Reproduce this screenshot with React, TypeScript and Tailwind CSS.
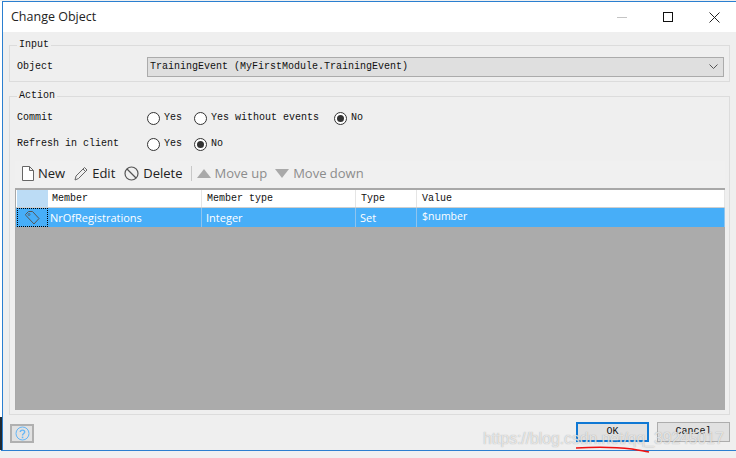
import React from "react";

const mono = "font-['Liberation_Mono',monospace] text-[10px] leading-none text-[#111]";
const ui = "font-['Open_Sans',sans-serif]";

function Radio({ label, checked, className = "" }: { label: string; checked?: boolean; className?: string }) {
  return (
    <div className={`flex items-center gap-[4px] ${className}`}>
      <span className="flex h-[13px] w-[13px] items-center justify-center rounded-full border border-[#333] bg-white">
        {checked && <span className="h-[7px] w-[7px] rounded-full bg-[#333]" />}
      </span>
      <span className={mono}>{label}</span>
    </div>
  );
}

function Tool({ icon, label, muted }: { icon: React.ReactNode; label: string; muted?: boolean }) {
  return (
    <div className="flex items-center gap-[4px]">
      {icon}
      <span className={`${ui} text-[13px] leading-none ${muted ? "text-[#8c8c8c]" : "text-[#222]"}`}>{label}</span>
    </div>
  );
}

const Cell = ({ cls, text, header, textCls = "text-[11px]" }: { cls: string; text: string; header?: boolean; textCls?: string }) => (
  <div className={`flex h-full items-center border-r ${header ? "border-[#e5e5e5]" : "border-[#8fc4ee]"} ${cls}`}>
    <span className={header ? mono : `${ui} ${textCls} leading-none text-white`}>{text}</span>
  </div>
);

export default function App() {
  return (
    <div className="relative h-[458px] w-[736px] overflow-hidden bg-[#f0f0f0]">
      <div className="absolute left-0 top-[1px] h-[416px] w-[2px] bg-white" />
      <div className="absolute left-0 top-[417px] h-[33px] w-[2px] bg-[#1f2a33]" />
      <div className="ml-[1px] mt-[1px] flex h-[450px] w-[740px] flex-col border-b border-l-2 border-t border-[#2b7fd0] bg-[#efefef]">
        {/* title bar */}
        <div className="flex h-[30px] shrink-0 items-center justify-between bg-white pl-[8px] pr-[20px]">
          <span className={`${ui} text-[12.5px] text-[#222]`}>Change Object</span>
          <div className="flex items-center gap-[36px]">
            <span className="h-px w-[10px] bg-[#c4c4c4]" />
            <span className="h-[10px] w-[10px] border border-[#111]" />
            <svg width="11" height="11" viewBox="0 0 11 11" className="mr-[1px]">
              <path d="M0.5 0.5 10.5 10.5 M10.5 0.5 0.5 10.5" stroke="#222" strokeWidth="1" fill="none" />
            </svg>
          </div>
        </div>

        <div className="flex w-[727px] flex-1 flex-col pl-[6px] pt-[8px]">
          {/* Input */}
          <fieldset className="h-[42px] border border-[#dcdcdc] pl-[7px] pr-[5px]">
            <legend className={`${mono} px-[2px]`}>Input</legend>
            <div className="mt-[7px] flex items-center">
              <span className={`${mono} w-[130px]`}>Object</span>
              <div className="flex h-[20px] flex-1 items-center justify-between border border-[#ababab] bg-[#dfdfdf] pl-[2px] pr-[5px]">
                <span className={mono}>TrainingEvent (MyFirstModule.TrainingEvent)</span>
                <svg width="9" height="6" viewBox="0 0 9 6">
                  <path d="M0.5 0.5 4.5 4.5 8.5 0.5" stroke="#555" fill="none" />
                </svg>
              </div>
            </div>
          </fieldset>

          {/* Action */}
          <fieldset className="mt-[9px] h-[324px] border border-[#dcdcdc] pl-[5px] pr-[4px]">
            <legend className={`${mono} ml-[2px] px-[2px]`}>Action</legend>
            <div className="flex h-[34px] items-center pl-[2px]">
              <span className={`${mono} w-[130px]`}>Commit</span>
              <Radio label="Yes" />
              <Radio label="Yes without events" className="ml-[12px]" />
              <Radio checked label="No" className="ml-[15px]" />
            </div>
            <div className="flex h-[18px] items-center pl-[2px]">
              <span className={`${mono} w-[130px]`}>Refresh in client</span>
              <Radio label="Yes" />
              <Radio checked label="No" className="ml-[12px]" />
            </div>

            {/* toolbar */}
            <div className="mt-[8px] flex h-[26px] items-center bg-[#f0f0f0] pb-[2px] pl-[6px]">
              <Tool
                label="New"
                icon={
                  <svg width="13" height="15" viewBox="0 0 13 15">
                    <path d="M1.5 0.5H8.5L12.5 4.5V14.5H1.5Z M8.5 0.5V4.5H12.5" stroke="#666" fill="#fff" />
                  </svg>
                }
              />
              <div className="ml-[9px]">
                <Tool
                  label="Edit"
                  icon={
                    <svg width="14" height="15" viewBox="0 0 14 15">
                      <path d="M1 14 2 10 10.5 1.5 13 4 4.5 12.5Z M9 3 11.5 5.5" stroke="#666" fill="none" />
                    </svg>
                  }
                />
              </div>
              <div className="ml-[9px]">
                <Tool
                  label="Delete"
                  icon={
                    <svg width="15" height="15" viewBox="0 0 15 15">
                      <circle cx="7.5" cy="7.5" r="6.5" stroke="#555" strokeWidth="1.2" fill="none" />
                      <path d="M3 3 12 12" stroke="#555" strokeWidth="1.2" />
                    </svg>
                  }
                />
              </div>
              <span className="ml-[8px] mr-[5px] h-[15px] w-px bg-[#c8c8c8]" />
              <Tool
                muted
                label="Move up"
                icon={
                  <svg width="14" height="9" viewBox="0 0 14 9">
                    <path d="M7 0 14 9H0Z" fill="#a9a9a9" />
                  </svg>
                }
              />
              <div className="ml-[8px]">
                <Tool
                  muted
                  label="Move down"
                  icon={
                    <svg width="14" height="9" viewBox="0 0 14 9">
                      <path d="M0 0H14L7 9Z" fill="#a9a9a9" />
                    </svg>
                  }
                />
              </div>
            </div>

            {/* grid */}
            <div className="mt-[1px] flex h-[222px] flex-col border-l border-t-2 border-[#a8a8a8] bg-[#ababab]">
              <div className="flex h-[17px] shrink-0 bg-white">
                <div className="ml-[1px] h-full w-[31px] bg-[#bcdcf5]" />
                <Cell header cls="w-[154px] pl-[4px]" text="Member" />
                <Cell header cls="w-[154px] pl-[5px]" text="Member type" />
                <Cell header cls="w-[61px] pl-[5px]" text="Type" />
                <Cell header cls="flex-1 pl-[5px]" text="Value" />
              </div>
              <div className="flex h-[20px] shrink-0 border-t border-[#cfcfcf] bg-[#47aef8]">
                <div className="ml-[1px] flex h-full w-[31px] items-center justify-center border border-dotted border-black">
                  <svg width="15" height="14" viewBox="0 0 15 14">
                    <path d="M0.5 3.5 3.5 0.5H7.5L14 7.5 9 13 1 4.5Z" stroke="#555" fill="none" />
                    <circle cx="4" cy="3.5" r="1" stroke="#555" fill="none" strokeWidth="0.7" />
                  </svg>
                </div>
                <Cell cls="w-[154px] pl-[2px]" text="NrOfRegistrations" />
                <Cell cls="w-[154px] pl-[4px]" text="Integer" />
                <Cell cls="w-[61px] pl-[4px]" text="Set" />
                <Cell cls="flex-1 pb-[3px] pl-[5px]" textCls="text-[10.5px]" text="$number" />
              </div>
            </div>
          </fieldset>

          {/* footer */}
          <div className="mt-[7px] flex items-start justify-between">
            <div className="ml-[1px] mt-[2px] flex h-[19px] w-[24px] items-center justify-center border-2 border-[#b0b0b0] bg-[#e1e1e1]">
              <svg width="15" height="15" viewBox="0 0 15 15">
                <circle cx="7.5" cy="7.5" r="6.5" stroke="#64b6f7" fill="none" />
                <path d="M5.3 6C5.3 3.5 9.7 3.5 9.7 6 9.7 7.6 7.5 7.5 7.5 9.5" stroke="#64b6f7" strokeWidth="1.4" fill="none" />
                <rect x="6.8" y="10.6" width="1.5" height="1.6" fill="#64b6f7" />
              </svg>
            </div>
            <div className="flex gap-[8px]">
              <div className="flex h-[20px] w-[73px] items-center justify-center border-2 border-[#0f78d4] bg-[#e1e1e1]">
                <span className={mono}>OK</span>
              </div>
              <div className="flex h-[20px] w-[73px] items-center justify-center border border-[#adadad] bg-[#e1e1e1]">
                <span className={mono}>Cancel</span>
              </div>
            </div>
          </div>
        </div>
      </div>

      {/* annotation over the screenshot */}
      <span className="absolute left-[483px] top-[431px] font-['Liberation_Sans',sans-serif] text-[15.7px] leading-none text-white/70 [text-shadow:0_0_1px_rgba(120,120,120,0.7)]">
        https://blog.csdn.net/qq_39245017
      </span>
      <svg className="absolute left-[570px] top-[445px]" width="85" height="10" viewBox="0 0 85 10">
        <path d="M6 3C25 2 45 2 62 4 68 5 74 6 79 7" stroke="#f01010" strokeWidth="1.5" fill="none" />
      </svg>
    </div>
  );
}
